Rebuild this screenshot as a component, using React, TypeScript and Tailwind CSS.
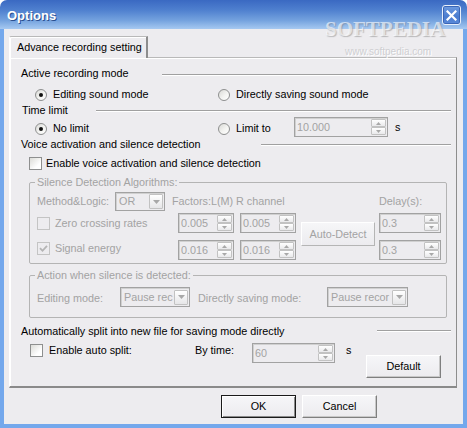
import React from "react";

const DIS = "text-[#A3A3A3]";

function Radio({ checked }: { checked?: boolean }) {
  return (
    <span className="w-[12px] h-[12px] shrink-0 rounded-full border border-[#8E8F8F] bg-[linear-gradient(135deg,#D9D9D6_0%,#F4F4F2_55%,#FFFFFF_100%)] flex items-center justify-center">
      {checked && <span className="w-[4px] h-[4px] rounded-full bg-[#111]" />}
    </span>
  );
}

function Check({ checked, disabled }: { checked?: boolean; disabled?: boolean }) {
  return (
    <span
      className={
        disabled
          ? "w-[13px] h-[13px] shrink-0 border border-[#C4C4C4] bg-[#EDECEF] flex items-center justify-center"
          : "w-[13px] h-[13px] shrink-0 border border-[#8E8F8F] bg-[linear-gradient(135deg,#DCDCD8_0%,#FFFFFF_70%)] flex items-center justify-center"
      }
    >
      {checked && (
        <svg width="9" height="9" viewBox="0 0 9 9">
          <path d="M1 4.2 L3.5 6.8 L8 1.8" fill="none" stroke={disabled ? "#B4B4B4" : "#222"} strokeWidth="1.8" />
        </svg>
      )}
    </span>
  );
}

function SpinBtn({ up }: { up?: boolean }) {
  return (
    <span className="w-[15px] h-[8px] border border-[#C2C2C2] rounded-[1px] bg-[linear-gradient(180deg,#FFFFFF_0%,#E9E9EB_100%)] flex items-center justify-center">
      <svg width="5" height="3" viewBox="0 0 5 3">
        <path d={up ? "M0 3 L2.5 0 L5 3Z" : "M0 0 L2.5 3 L5 0Z"} fill="#A8A8A8" />
      </svg>
    </span>
  );
}

function Spin({ value, cls }: { value: string; cls: string }) {
  return (
    <div className={"flex items-center border border-[#A2A2A2] shadow-[inset_1px_1px_0_#D0D0D0] bg-[#EDECEF] " + cls}>
      <span className={"flex-1 pl-[2px] " + DIS}>{value}</span>
      <span className="flex flex-col mr-[1px]">
        <SpinBtn up />
        <SpinBtn />
      </span>
    </div>
  );
}

function Combo({ value, cls }: { value: string; cls: string }) {
  return (
    <div className={"flex items-center border border-[#A2A2A2] shadow-[inset_1px_1px_0_#D0D0D0] bg-[#EDECEF] overflow-hidden " + cls}>
      <span className={"flex-1 pl-[3px] whitespace-nowrap overflow-hidden " + DIS}>{value}</span>
      <span className="w-[14px] h-[15px] mr-[1px] shrink-0 border border-[#C2C2C2] rounded-[1px] bg-[linear-gradient(180deg,#FFFFFF_0%,#E6E6E8_100%)] flex items-center justify-center">
        <svg width="7" height="4" viewBox="0 0 7 4">
          <path d="M0 0 L3.5 4 L7 0Z" fill="#A8A8A8" />
        </svg>
      </span>
    </div>
  );
}

function HeadLine({ cls }: { cls: string }) {
  return <div className={"ml-auto h-[2px] border-t border-t-[#A0A0A0] border-b border-b-white " + cls} />;
}

function Btn({ label, cls, def, disabled }: { label: string; cls: string; def?: boolean; disabled?: boolean }) {
  const base = "flex items-center justify-center bg-[linear-gradient(180deg,#F6F6F8_0%,#ECEBEF_100%)] ";
  const border = def
    ? "border border-[#1A1A1A] shadow-[inset_1px_1px_0_#FFFFFF,inset_-1px_-1px_0_#8A8A8A] "
    : disabled
    ? "border border-t-white border-l-white border-b-[#B5B5B5] border-r-[#B5B5B5] "
    : "border border-t-white border-l-white border-b-[#7F7F7F] border-r-[#7F7F7F] shadow-[inset_-1px_-1px_0_#C8C8C8] ";
  return <div className={base + border + (disabled ? DIS + " " : "text-black ") + cls}>{label}</div>;
}

export default function App() {
  return (
    <div className="relative w-[467px] h-[428px] overflow-hidden bg-white font-['Liberation_Sans',Arial,sans-serif] text-[10.8px] leading-[13px] text-black">
      {/* Title bar */}
      <div className="h-[29px] rounded-t-[7px] bg-[linear-gradient(180deg,#3A69C2_0%,#4F80CF_35%,#74A2DE_70%,#A6C9F1_100%)] flex items-start justify-between">
        <span className="ml-[7px] mt-[8px] text-[13px] leading-[16px] font-bold text-white [text-shadow:1px_1px_0_#2A4F8F]">
          Options
        </span>
        <span className="mt-[5px] mr-[6px] w-[19px] h-[20px] rounded-[3px] border border-[#E8F0FB] bg-[linear-gradient(180deg,#6E9BE0_0%,#4A7CCF_60%,#5B8ADA_100%)] flex items-center justify-center shadow-[inset_0_0_0_1px_#3B66B6]">
          <svg width="11" height="11" viewBox="0 0 11 11">
            <path d="M1.5 1.5 L9.5 9.5 M9.5 1.5 L1.5 9.5" stroke="#FFFFFF" strokeWidth="2.2" strokeLinecap="square" />
          </svg>
        </span>
      </div>

      {/* Body */}
      <div className="h-[399px] bg-[#EDECEF] border-l-4 border-r-4 border-b-4 border-[#74A8EC] flex flex-col">
        {/* Tab */}
        <div className="ml-[5px] mt-[7px] flex">
          <div className="relative z-10 w-[139px] h-[22px] -mb-[1px] bg-[#EDECEF] border-l border-t border-l-[#FFFFFF] border-t-[#B9B9B9] border-r-2 border-r-[#8D8D8D] rounded-tl-[2px] shadow-[inset_1px_1px_0_#FFFFFF] pl-[7px] pt-[4px] whitespace-nowrap">
            Advance recording setting
          </div>
        </div>

        {/* Panel */}
        <div className="ml-[5px] w-[448px] h-[331px] border-l border-t border-l-white border-t-[#B9B9B9] border-r border-r-[#8D8D8D] border-b-2 border-b-[#8A8A8A] shadow-[inset_1px_1px_0_#FFFFFF] flex flex-col">
          {/* Active recording mode */}
          <div className="mt-[9px] flex items-start pr-[5px] h-[13px]">
            <span className="ml-[11px]">Active recording mode</span>
            <HeadLine cls="mt-[7px] w-[289px]" />
          </div>
          <div className="mt-[8px] flex items-center h-[13px]">
            <div className="ml-[25px] w-[183px] flex items-center">
              <Radio checked />
              <span className="ml-[6px]">Editing sound mode</span>
            </div>
            <div className="flex items-center">
              <Radio />
              <span className="ml-[6px]">Directly saving sound mode</span>
            </div>
          </div>

          {/* Time limit */}
          <div className="mt-[3px] flex items-start pr-[5px] h-[13px]">
            <span className="ml-[12px]">Time limit</span>
            <HeadLine cls="mt-[6px] w-[355px]" />
          </div>
          <div className="flex items-start h-[20px]">
            <div className="ml-[25px] mt-[5px] w-[183px] flex items-center">
              <Radio checked />
              <span className="ml-[6px]">No limit</span>
            </div>
            <div className="mt-[5px] w-[76px] flex items-center">
              <Radio />
              <span className="ml-[6px]">Limit to</span>
            </div>
            <Spin value="10.000" cls="w-[94px] h-[20px]" />
            <span className="ml-[7px] mt-[4px]">s</span>
          </div>

          {/* Voice activation */}
          <div className="mt-[1px] flex items-start pr-[5px] h-[13px]">
            <span className="ml-[11px]">Voice activation and silence detection</span>
            <HeadLine cls="mt-[6px] w-[190px]" />
          </div>
          <div className="mt-[6px] flex items-center h-[13px]">
            <span className="ml-[19px]">
              <Check />
            </span>
            <span className="ml-[4px]">Enable voice activation and silence detection</span>
          </div>

          {/* Silence Detection Algorithms */}
          <fieldset className="mt-[6px] ml-[19px] w-[418px] min-w-0 border border-[#B4B4B4] rounded-[2px] pl-[7px] pr-[4px] pt-[3px] pb-[3px]">
            <legend className={"-ml-[2px] px-[2px] " + DIS}>Silence Detection Algorithms:</legend>
            <div className={"flex items-center h-[19px] " + DIS}>
              <span className="w-[78px]">Method&amp;Logic:</span>
              <Combo value="OR" cls="w-[50px] h-[19px]" />
              <span className="ml-[7px] w-[64px] whitespace-nowrap">Factors:L(M)</span>
              <span className="w-[143px]">R channel</span>
              <span>Delay(s):</span>
            </div>
            <div className="mt-[2px] flex items-stretch">
              <div className="flex flex-col gap-[7px]">
                <div className="flex items-center h-[20px]">
                  <div className="w-[141px] flex items-center">
                    <Check disabled />
                    <span className={"ml-[5px] " + DIS}>Zero crossing rates</span>
                  </div>
                  <Spin value="0.005" cls="w-[56px] h-[20px]" />
                  <Spin value="0.005" cls="ml-[6px] w-[56px] h-[20px]" />
                </div>
                <div className="flex items-center h-[20px]">
                  <div className="w-[141px] flex items-center -mt-[3px]">
                    <Check disabled checked />
                    <span className={"ml-[5px] " + DIS}>Signal energy</span>
                  </div>
                  <Spin value="0.016" cls="w-[56px] h-[20px]" />
                  <Spin value="0.016" cls="ml-[6px] w-[56px] h-[20px]" />
                </div>
              </div>
              <div className="ml-[5px] self-center -mt-[5px]">
                <Btn label="Auto-Detect" cls="w-[74px] h-[24px]" disabled />
              </div>
              <div className="ml-[4px] flex flex-col gap-[7px]">
                <Spin value="0.3" cls="w-[62px] h-[20px]" />
                <Spin value="0.3" cls="w-[62px] h-[20px]" />
              </div>
            </div>
          </fieldset>

          {/* Action when silence is detected */}
          <fieldset className="mt-[5px] ml-[19px] w-[418px] min-w-0 border border-[#B4B4B4] rounded-[2px] pl-[7px] pr-[4px] pt-[5px] pb-[10px]">
            <legend className={"-ml-[2px] px-[2px] " + DIS}>Action when silence is detected:</legend>
            <div className={"flex items-center h-[20px] " + DIS}>
              <span className="w-[83px] mt-[2px]">Editing mode:</span>
              <Combo value="Pause rec" cls="w-[70px] h-[20px]" />
              <span className="ml-[8px] w-[129px] mt-[2px]">Directly saving mode:</span>
              <Combo value="Pause recor" cls="w-[81px] h-[20px]" />
            </div>
          </fieldset>

          {/* Auto split */}
          <div className="mt-[7px] flex items-start pr-[5px] h-[13px]">
            <span className="ml-[11px]">Automatically split into new file for saving mode directly</span>
            <HeadLine cls="mt-[5px] w-[74px]" />
          </div>
          <div className="mt-[5px] flex items-start">
            <div className="ml-[20px] w-[165px] mt-[1px] flex items-center">
              <Check />
              <span className="ml-[6px]">Enable auto split:</span>
            </div>
            <span className="w-[57px] mt-[1px]">By time:</span>
            <Spin value="60" cls="w-[83px] h-[20px]" />
            <span className="ml-[11px] w-[20px] mt-[1px]">s</span>
            <div className="mt-[12px]">
              <Btn label="Default" cls="w-[75px] h-[23px]" />
            </div>
          </div>
        </div>

        {/* Bottom buttons */}
        <div className="mt-[7px] flex">
          <Btn label="OK" cls="ml-[217px] w-[75px] h-[23px]" def />
          <Btn label="Cancel" cls="ml-[6px] w-[75px] h-[23px]" />
        </div>
      </div>

      {/* Watermark overlay */}
      <div className="absolute left-[325px] top-[18px] font-['Liberation_Serif',serif] font-bold text-[21px] leading-[22px] text-white/60 [text-shadow:1px_1px_1px_rgba(120,120,120,0.45)] pointer-events-none">
        SOFTPEDIA
      </div>
      <div className="absolute left-[345px] top-[46px] text-[10px] leading-[12px] text-[#CFCFD2] [text-shadow:1px_1px_0_#FFFFFF] pointer-events-none">
        www.softpedia.com
      </div>
    </div>
  );
}
